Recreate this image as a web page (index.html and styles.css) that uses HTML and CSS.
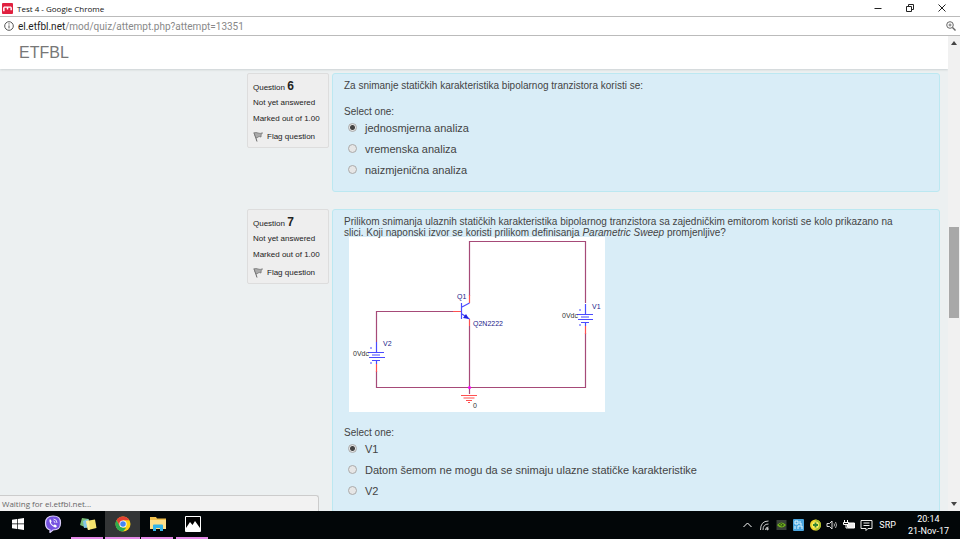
FILE: index.html
```html
<!DOCTYPE html>
<html lang="sr-Latn">
<head>
<meta charset="utf-8">
<title>Test 4</title>
<link rel="stylesheet" href="styles.css">
</head>
<body>
<header class="titlebar">
  <svg class="favicon" width="11" height="11" viewBox="0 0 12 12"><rect width="12" height="12" rx="1" fill="#e0203f"/><path d="M2 9V4.500M2 4.500h8M6 4.500V7M10 4.500V8" fill="none" stroke="#fff" stroke-width="1.600"/></svg>
  <span class="window-title">Test 4 - Google Chrome</span>
  <div class="window-buttons">
    <button aria-label="Minimize"><svg width="10" height="10" viewBox="0 0 10 10"><path d="M1.500 5.500h7" stroke="#222"/></svg></button>
    <button aria-label="Restore"><svg width="10" height="10" viewBox="0 0 10 10" fill="none" stroke="#222"><path d="M1.500 3.500h5v5h-5zM3.500 3v-1.500h5v5h-1.500"/></svg></button>
    <button aria-label="Close"><svg width="10" height="10" viewBox="0 0 10 10"><path d="M1.500 1.500l7 7m0-7l-7 7" stroke="#222"/></svg></button>
  </div>
</header>
<div class="addressbar">
  <svg width="10" height="10" viewBox="0 0 10 10" fill="none" stroke="#555"><circle cx="5" cy="5" r="4.300"/><path d="M5 4.400v3M5 2.300v1.200"/></svg>
  <span class="url"><b>el.etfbl.net</b>/mod/quiz/attempt.php?attempt=13351</span>
  <svg class="zoom-icon" width="10" height="10" viewBox="0 0 10 10" fill="none" stroke="#666"><circle cx="4" cy="4" r="3.300"/><path d="M6.500 6.500l3 3" stroke-width="1.400"/><path d="M2.500 4h3M4 2.500v3" stroke-width=".9"/></svg>
</div>
<div class="viewport">
  <div class="page">
    <nav class="navbar"><a href="#">ETFBL</a></nav>
    <main class="quiz">
      <section class="question">
        <aside class="info">
          <h3>Question <span>6</span></h3>
          <p>Not yet answered</p>
          <p>Marked out of 1.00</p>
          <a class="flag" href="#"><svg width="10" height="10" viewBox="0 0 10 10"><path d="M1 .5l3 9" stroke="#666" fill="none"/><path d="M1 1Q3 0 5 1T9.500 .8Q7.500 2.500 8 5Q6 4 5 5T3 6z" fill="#aaa" stroke="#777" stroke-width=".8"/></svg>Flag question</a>
        </aside>
        <form class="formulation">
          <p class="prompt">Za snimanje statičkih karakteristika bipolarnog tranzistora koristi se:</p>
          <p class="select">Select one:</p>
          <label><input type="radio" name="q6" checked>jednosmjerna analiza</label>
          <label><input type="radio" name="q6">vremenska analiza</label>
          <label><input type="radio" name="q6">naizmjenična analiza</label>
        </form>
      </section>
      <section class="question">
        <aside class="info">
          <h3>Question <span>7</span></h3>
          <p>Not yet answered</p>
          <p>Marked out of 1.00</p>
          <a class="flag" href="#"><svg width="10" height="10" viewBox="0 0 10 10"><path d="M1 .5l3 9" stroke="#666" fill="none"/><path d="M1 1Q3 0 5 1T9.500 .8Q7.500 2.500 8 5Q6 4 5 5T3 6z" fill="#aaa" stroke="#777" stroke-width=".8"/></svg>Flag question</a>
        </aside>
        <form class="formulation">
          <p class="prompt">Prilikom snimanja ulaznih statičkih karakteristika bipolarnog tranzistora sa zajedničkim emitorom koristi se kolo prikazano na slici. Koji naponski izvor se koristi prilikom definisanja <em>Parametric Sweep</em> promjenljive?</p>
          <svg class="circuit" width="256" height="175" viewBox="349 237 256 175">
            <rect x="349" y="237" width="256" height="175" fill="#fff"/>
            <g fill="none" stroke="#a64a78" stroke-width="1.200">
              <path d="M469.500 296V241.500H585.500V303M585.500 333V387.500H376.500V371M376.500 342V311.500H454M469.500 326V394"/>
            </g>
            <g fill="none" stroke="#ff5050" stroke-width="1.200">
              <path d="M469.500 295v8M453 311.500h8M469.500 319v7M585.500 326v8M376.500 364v8M461 395.500h16M463.500 398h11M466 400.500h6M468 402.500h2"/>
            </g>
            <g fill="none" stroke="#4a4aff" stroke-width="1.200">
              <path d="M461.500 303v16M462 307l7.500-4M462 314l7.500 5"/>
              <path d="M585.500 304v10.500M577 314.500h16M581 317h8M578 319.500h15M581 322.500h8M585.500 322v4"/>
              <path d="M376.500 342v10M368 352.500h16M372 355h8M369 357.500h16M372 360.500h8M376.500 360v4"/>
              <path d="M579 310h2M579 325h2M370 348h2M370 363h2"/>
            </g>
            <path d="M469 319l-6-1 3-4z" fill="#2020e0"/>
            <circle cx="469.500" cy="387.500" r="1.500" fill="#f0f"/>
            <g class="part"><text x="457" y="299">Q1</text><text x="473" y="326">Q2N2222</text><text x="592" y="309">V1</text><text x="383" y="346">V2</text></g>
            <g class="value"><text x="562" y="318">0Vdc</text><text x="353" y="356">0Vdc</text><text x="473" y="408">0</text></g>
          </svg>
          <p class="select">Select one:</p>
          <label><input type="radio" name="q7" checked>V1</label>
          <label><input type="radio" name="q7">Datom šemom ne mogu da se snimaju ulazne statičke karakteristike</label>
          <label><input type="radio" name="q7">V2</label>
        </form>
      </section>
    </main>
  </div>
  <div class="scrollbar">
    <svg width="6" height="4" viewBox="0 0 6 4"><path d="M0 4l3-4 3 4z" fill="#444"/></svg>
    <div class="track"><div class="thumb"></div></div>
    <svg width="6" height="4" viewBox="0 0 6 4"><path d="M0 0l3 4 3-4z" fill="#444"/></svg>
  </div>
  <div class="status">Waiting for el.etfbl.net...</div>
</div>
<footer class="taskbar">
  <button class="task" aria-label="Start"><svg width="12" height="12" viewBox="0 0 12 12" fill="#fff"><path d="M0 1.800l5-.8v4.600H0zM5.700.9L12 0v5.600H5.700zM0 6.300h5V11l-5-.8zM5.700 6.300H12V12l-6.300-.9z"/></svg></button>
  <button class="task" aria-label="Viber"><svg width="18" height="18" viewBox="0 0 18 18"><path d="M9 1c5.500 0 7.500 2 7.500 7s-2 7-7.500 7L6 17.500V15C2.500 14 1.500 12 1.500 8s2-7 7.500-7z" fill="#7552e0" stroke="#d9cdf8" stroke-width="1.200"/><path d="M5.500 4.500Q6.500 3.500 7.500 6q.3.700-.6 1.300 0 2 2.600 3.200 1-1.300 2-.7 2.300 1.300.7 2.400Q11 13 8 10.500T5.500 4.500z" fill="#fff"/><path d="M9.500 4Q13 4.300 13 8M9.500 6Q11 6 11 8" fill="none" stroke="#fff" stroke-width=".8"/></svg></button>
  <button class="task open" aria-label="Sticky Notes"><svg width="18" height="16" viewBox="0 0 18 16"><path d="M3 2l7 1-2 9-7-3z" fill="#79bd75"/><path d="M4 5l5-2 2 8-6 1z" fill="#84c6e8"/><path d="M7 5l9-1.500L17.500 12 9 14z" fill="#f4e36d"/><path d="M7 5l3-.5 1 9-2 .5z" fill="#faf0a0"/></svg></button>
  <button class="task open active" aria-label="Google Chrome"><svg width="16" height="16" viewBox="0 0 16 16"><circle cx="8" cy="8" r="7.500" fill="#fcd116"/><path d="M8 8L4.800 9.900 1.500 4.200A7.500 7.500 0 0 1 14.500 4.300H8z" fill="#e34133"/><path d="M1.500 4.200L4.800 9.900 8 11.700h3.200L8 15.500A7.500 7.500 0 0 1 1.500 4.200z" fill="#2da94f"/><circle cx="8" cy="8" r="3.600" fill="#fff"/><circle cx="8" cy="8" r="2.800" fill="#4285f4"/></svg></button>
  <button class="task open" aria-label="File Explorer"><svg width="16" height="16" viewBox="0 0 16 16"><path d="M0 1h6l1 1.500h9V13H0z" fill="#f0c04d"/><path d="M0 4h16v9H0z" fill="#ffe08a"/><path d="M3 15V9.500q0-1 1-1h8q1 0 1 1V15h-3v-3H6v3z" fill="#35b4e8"/></svg></button>
  <button class="task open" aria-label="Photos"><svg width="16" height="16" viewBox="0 0 16 16"><path d="M.5.500h15v15H.500z" stroke="#fff" fill="#000"/><path d="M1 12l4-6 2.500 3L10 5l5 7v3H1z" fill="#fff"/></svg></button>
  <div class="tray">
    <svg width="10" height="10" viewBox="0 0 10 10"><path d="M1 7l4-4 4 4" fill="none" stroke="#fff"/></svg>
    <svg width="10" height="12" viewBox="0 0 10 12" fill="none" stroke="#ccc"><path d="M1 11Q1 2 9 2M3.500 11Q3.500 5 9 5M6 11q0-3 3-3"/><circle cx="8" cy="10" r=".8" fill="#fff"/></svg>
    <svg width="10" height="10" viewBox="0 0 10 10"><path d="M0 0h10v10H0z" fill="#394139"/><path d="M.5 5Q5 0 9.500 5 5 10 .5 5z" fill="#72b51c"/><path d="M2.500 5Q5 2 7 5 5 7.500 4 5" fill="none" stroke="#263d13"/></svg>
    <svg width="11" height="12" viewBox="0 0 11 12"><rect width="11" height="12" rx="1" fill="#4ba6df"/><path d="M2 2h3v3H2zM7 2v3h2M2 7v3M5 10V7h4v3" fill="none" stroke="#e7f7ff"/></svg>
    <svg width="12" height="12" viewBox="0 0 12 12"><circle cx="6" cy="6" r="5.500" fill="#eed42b"/><path d="M6 .5a5.500 5.500 0 0 1 0 11z" fill="#a5bd2e"/><circle cx="6" cy="6" r="3.500" fill="#f8ee62"/><path d="M6 3.500v5M3.500 6h5" stroke="#328332" stroke-width="1.800"/></svg>
    <svg width="12" height="10" viewBox="0 0 12 10" fill="none" stroke="#ddd"><path d="M.5 3.500H3l2.500-2.500v8L3 6.500H.500z"/><path d="M7.500 3.500q1 1.500 0 3M9 2q2 3 0 6" stroke-width=".8"/></svg>
    <svg width="12" height="10" viewBox="0 0 12 10"><path d="M4 3h7v5H4z" fill="#eee" stroke="#fff"/><path d="M1 0v2M4 0v2M0 2.500h5v2H0zM2.500 4v4H4" stroke="#fff" fill="#111"/></svg>
    <svg width="12" height="12" viewBox="0 0 12 12" fill="none" stroke="#eee"><path d="M.5 1.500h11v8H7.500L5.500 11.500v-2h-5zM3 4h6M3 6.500h6"/></svg>
    <span class="lang">SRP</span>
    <time class="clock">20:14<br>21-Nov-17</time>
  </div>
</footer>
</body>
</html>
```
FILE: styles.css
```css
* { box-sizing: border-box; }
body {
  margin: 0;
  height: 100vh;
  display: flex;
  flex-direction: column;
  overflow: hidden;
  font-family: "Liberation Sans", Arial, sans-serif;
  color: #444;
  background: #fff;
}
p, h3 { margin: 0; font-weight: normal; }
a { color: inherit; text-decoration: none; }
button { border: 0; padding: 0; background: none; display: grid; place-items: center; }
svg { display: block; flex: none; }

.titlebar {
  flex: none;
  height: 16px;
  display: flex;
  align-items: center;
  gap: 4px;
  padding: 0 2px;
  font: 8px "Open Sans", sans-serif;
  color: #111;
}
.window-buttons { margin-left: auto; display: flex; }
.window-buttons button { width: 32px; height: 14px; }

.addressbar {
  flex: none;
  height: 20px;
  display: flex;
  align-items: center;
  gap: 4px;
  padding: 0 4px;
  border: solid #bbb;
  border-width: 1px 0;
  font: 10px Roboto, sans-serif;
  color: #888;
}
.url b { font-weight: normal; color: #222; }
.zoom-icon { margin-left: auto; }

.viewport { flex: 1; min-height: 0; display: flex; position: relative; }
.page { flex: 1; min-width: 0; overflow: hidden; background: #ecf0f1; }
.navbar {
  height: 33px;
  padding: 0 19px;
  background: #fff;
  box-shadow: 0 1px 2px #ccd2d4;
  font-size: 16px;
  line-height: 34px;
  color: #777;
}

.quiz { padding: 4px 8px 0 247px; }
.question { display: flex; align-items: flex-start; gap: 3px; margin-bottom: 17px; }
.info {
  flex: none;
  width: 82px;
  padding: 4px 5px 2px;
  border: 1px solid #ddd;
  border-radius: 2px;
  background: #eee;
  font-size: 8px;
  line-height: 16px;
  color: #222;
  white-space: nowrap;
}
.info h3 { font-size: 8px; height: 17px; }
.info h3 span { font-size: 12px; font-weight: bold; }
.flag { display: flex; align-items: center; gap: 4px; margin-top: 2px; }
.formulation {
  flex: 1;
  min-width: 0;
  padding: 6px 30px 11px 11px;
  border: 1px solid #bce8f1;
  border-radius: 3px;
  background: #d9edf7;
  font-size: 10px;
}
.prompt { position: relative; z-index: 1; line-height: 11px; }
.select { margin-top: 16px; line-height: 10px; }
.circuit { margin: -1px 0 0 5px; }
.formulation label { display: flex; align-items: center; gap: 8px; height: 21px; padding-left: 4px; font-size: 11px; }
.formulation input {
  appearance: none;
  width: 9px;
  height: 9px;
  margin: 0;
  border: 1px solid #aaa;
  border-radius: 50%;
  background: #e6e6e6;
}
.formulation input:checked { background: radial-gradient(circle, #444 0 2px, #e6e6e6 3px); }
.part, .value { font-size: 7px; fill: #22228a; }
.value { fill: #333; }

.scrollbar {
  flex: none;
  width: 12px;
  display: flex;
  flex-direction: column;
  align-items: center;
  padding: 5px 0;
  background: #f1f1f1;
}
.track { flex: 1; align-self: stretch; padding: 0 1px; }
.thumb { height: 20%; margin-top: 182px; background: #a8a8a8; }
.status {
  position: absolute;
  left: 0;
  bottom: 0;
  width: 319px;
  height: 16px;
  padding-left: 2px;
  border: solid #ccc;
  border-width: 1px 1px 0 0;
  border-top-right-radius: 3px;
  background: #f2f2f2;
  font: 8px/15px "Open Sans", sans-serif;
  color: #666;
}

.taskbar { flex: none; height: 28px; display: flex; background: #020608; color: #fff; }
.task { width: 35px; border-bottom: 2px solid transparent; }
.task.open { border-image: linear-gradient(90deg, transparent 3px, #e58ae8 3px 31px, transparent 31px) 2; }
.task.active { background: #333536; border-image: linear-gradient(#e58ae8, #e58ae8) 2; }
.tray { margin-left: auto; display: flex; align-items: center; padding-right: 11px; font: 9px/12px Roboto, sans-serif; }
.tray svg { width: 17px; }
.lang { margin-left: 4px; }
.clock { margin-left: 12px; text-align: center; }
```
